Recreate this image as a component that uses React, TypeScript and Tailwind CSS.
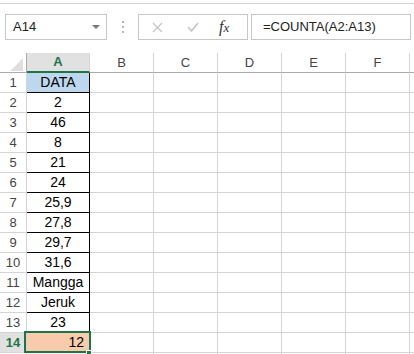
import React from 'react';

const cols = ['A', 'B', 'C', 'D', 'E', 'F'];
const data = ['DATA', '2', '46', '8', '21', '24', '25,9', '27,8', '29,7', '31,6', 'Mangga', 'Jeruk', '23', '12'];

function Toolbar() {
  return (
    <div className="h-[50px] border-t border-[#d5d5d5] mt-[3px] pt-[10px] pl-[5px] flex items-start">
      {/* Name box */}
      <div className="w-[102px] h-[26px] border border-[#c6c6c6] flex items-center pl-[7px] pr-[6px]">
        <span className="flex-1 text-[13px] text-[#222]">A14</span>
        <svg width="8" height="5" viewBox="0 0 8 5"><path d="M0 0h8L4 4z" fill="#7a7a7a" /></svg>
      </div>
      {/* grip dots */}
      <div className="w-[31px] h-[26px] flex flex-col items-center justify-center gap-[3px]">
        <span className="w-[2px] h-[2px] bg-[#b5b5b5]" />
        <span className="w-[2px] h-[2px] bg-[#b5b5b5]" />
        <span className="w-[2px] h-[2px] bg-[#b5b5b5]" />
      </div>
      {/* cancel / enter / fx */}
      <div className="w-[110px] h-[26px] border border-[#c6c6c6] flex items-center">
        <svg className="ml-[13px]" width="11" height="11" viewBox="0 0 11 11"><path d="M1 1l9 9M10 1l-9 9" stroke="#c4c4c4" strokeWidth="1.3" /></svg>
        <svg className="ml-[24px]" width="12" height="10" viewBox="0 0 12 10"><path d="M1 5l3.5 4L11 1" stroke="#c4c4c4" strokeWidth="1.6" fill="none" /></svg>
        <span className="ml-[20px] italic text-[16px] leading-none text-[#333]" style={{ fontFamily: '"Liberation Serif", serif' }}>f<span className="text-[13px]">x</span></span>
      </div>
      {/* formula input */}
      <div className="ml-[3px] flex-1 h-[26px] border border-[#c6c6c6] flex items-center pl-[11px] mr-[3px]">
        <span className="text-[13px] text-[#222]">=COUNTA(A2:A13)</span>
      </div>
    </div>
  );
}

function HeaderRow() {
  return (
    <div className="flex h-[20px]">
      <div className="w-[27px] shrink-0 border-r border-b border-[#ababab] relative">
        <svg className="absolute left-[10px] top-[5px]" width="13" height="13" viewBox="0 0 13 13"><path d="M13 0v13H0z" fill="#dfdfdf" /></svg>
      </div>
      {cols.map((c) => (
        <div
          key={c}
          className={
            c === 'A'
              ? 'w-[63px] shrink-0 bg-[#e1e1e1] border-r border-[#d4d4d4] border-b-2 border-b-[#217346] flex items-center justify-center text-[13px] font-bold text-[#217346]'
              : 'w-[64px] shrink-0 border-r border-[#d4d4d4] border-b border-b-[#ababab] flex items-center justify-center text-[13px] text-[#444]'
          }
        >
          {c}
        </div>
      ))}
      <div className="flex-1 border-b border-[#ababab]" />
    </div>
  );
}

function Row({ n }: { n: number }) {
  const sel = n === 14;
  const v = data[n - 1];
  return (
    <div className="flex h-[20px]">
      <div
        className={
          sel
            ? 'w-[27px] shrink-0 bg-[#e1e1e1] border-r border-b border-[#d4d4d4] flex items-center justify-center text-[13px] font-bold text-[#217346]'
            : 'w-[27px] shrink-0 border-r border-b border-[#d4d4d4] flex items-center justify-center text-[13px] text-[#444]'
        }
      >
        {n <= 14 ? n : ''}
      </div>
      <div
        className={
          'w-[63px] shrink-0 border-r border-b flex items-center text-[14px] text-black ' +
          (n <= 13 ? 'border-black ' : 'border-[#d4d4d4] ') +
          (n === 1 ? 'bg-[#bdd7ee] justify-center ' : '') +
          (sel ? 'bg-[#f8cbad] justify-end pr-[5px]' : 'justify-center')
        }
      >
        {v}
      </div>
      {cols.slice(1).map((c) => (
        <div key={c} className="w-[64px] shrink-0 border-r border-b border-[#d4d4d4]" />
      ))}
      <div className="flex-1 border-b border-[#d4d4d4]" />
    </div>
  );
}

export default function App() {
  const rows = Array.from({ length: 15 }, (_, i) => i + 1);
  return (
    <div className="w-[414px] h-[354px] overflow-hidden bg-white" style={{ fontFamily: '"Liberation Sans", Arial, sans-serif' }}>
      <Toolbar />
      <div className="relative">
        <HeaderRow />
        {rows.map((n) => (
          <Row key={n} n={n} />
        ))}
        {/* selection box on A14 */}
        <div className="absolute left-[24px] top-[278px] w-[67px] h-[22px] border-2 border-[#217346]" />
        <div className="absolute left-[86px] top-[297px] w-[6px] h-[6px] bg-[#217346] border border-white" />
      </div>
    </div>
  );
}
